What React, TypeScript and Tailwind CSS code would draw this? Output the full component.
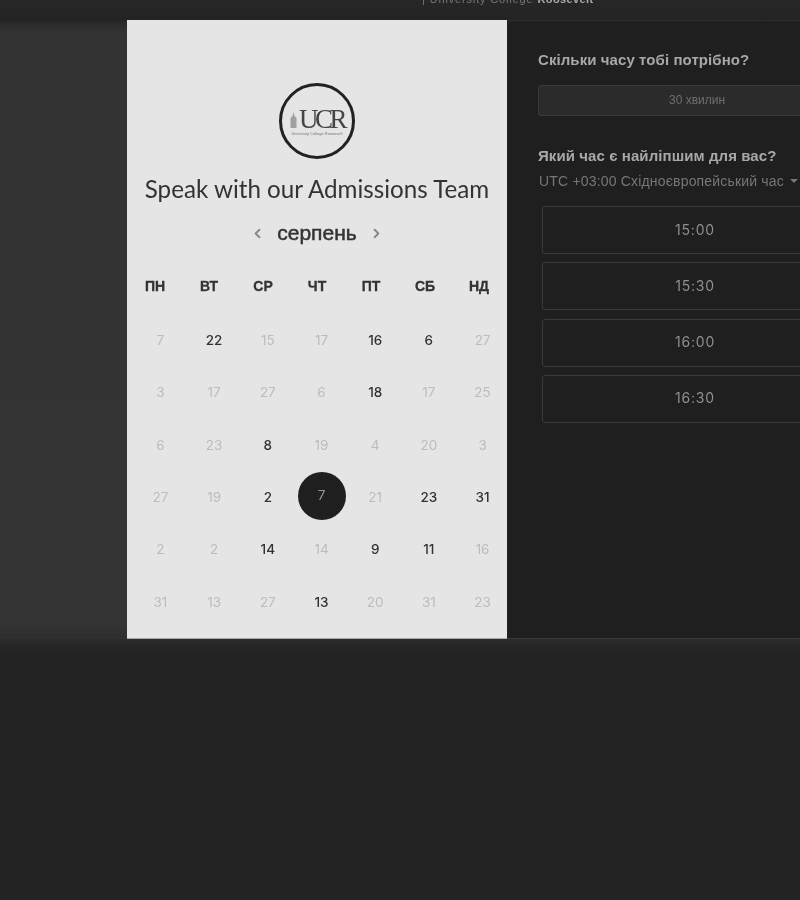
import { ChevronLeft, ChevronRight } from 'lucide-react';

const WEEK_DAYS = ['ПН', 'ВТ', 'СР', 'ЧТ', 'ПТ', 'СБ', 'НД'];

// дні календаря: active = можна вибрати
const DAYS: { n: number; active?: boolean; selected?: boolean }[] = [
  { n: 7 }, { n: 22, active: true }, { n: 15 }, { n: 17 }, { n: 16, active: true }, { n: 6, active: true }, { n: 27 },
  { n: 3 }, { n: 17 }, { n: 27 }, { n: 6 }, { n: 18, active: true }, { n: 17 }, { n: 25 },
  { n: 6 }, { n: 23 }, { n: 8, active: true }, { n: 19 }, { n: 4 }, { n: 20 }, { n: 3 },
  { n: 27 }, { n: 19 }, { n: 2, active: true }, { n: 7, selected: true }, { n: 21 }, { n: 23, active: true }, { n: 31, active: true },
  { n: 2 }, { n: 2 }, { n: 14, active: true }, { n: 14 }, { n: 9, active: true }, { n: 11, active: true }, { n: 16 },
  { n: 31 }, { n: 13 }, { n: 27 }, { n: 13, active: true }, { n: 20 }, { n: 31 }, { n: 23 },
];

const SLOTS = ['15:00', '15:30', '16:00', '16:30'];

function Logo() {
  return (
    <div className="w-[76px] h-[76px] rounded-full border-[3px] border-[#222222] flex flex-col items-center justify-center">
      <div className="flex items-end h-[24px]">
        <svg width="7" height="16" viewBox="0 0 7 16" className="mb-[3px] mr-[2px]">
          <path d="M3.5 0 L4.5 4 L6.5 6 V16 H0.5 V6 L2.5 4 Z" fill="#a0a0a0" />
        </svg>
        <span className="font-['Liberation_Serif',serif] text-[27px] leading-[24px] tracking-[-3.5px] text-[#444444]">UCR</span>
      </div>
      <span className="font-['Liberation_Sans',sans-serif] text-[4px] leading-[5px] text-[#777777] whitespace-nowrap">University College Roosevelt</span>
    </div>
  );
}

function Calendar() {
  return (
    <div className="w-[380px] h-[619px] shrink-0 bg-[#e5e5e5] border-b border-[#a8a8a8] flex flex-col items-center pt-[63px]">
      <Logo />
      <h1 className="mt-[13px] font-['Lato',sans-serif] text-[24.2px] leading-[34px] text-[#333333] whitespace-nowrap">
        Speak with our Admissions Team
      </h1>
      <div className="mt-[11px] flex items-center justify-center gap-[11px] h-[32px]">
        <ChevronLeft size={15} strokeWidth={3} className="text-[#888888]" />
        <span className="w-[82px] text-center font-['Liberation_Sans',sans-serif] text-[21px] text-[#333333] [-webkit-text-stroke:0.5px_#333333]">
          серпень
        </span>
        <ChevronRight size={15} strokeWidth={3} className="text-[#888888]" />
      </div>
      <div className="mt-[27px] self-start ml-[1px] grid grid-cols-[repeat(7,54px)] font-['Liberation_Sans',sans-serif] text-[14px] font-bold leading-[20px] text-[#333333] [-webkit-text-stroke:0.3px_#333333]">
        {WEEK_DAYS.map((day) => (
          <div key={day} className="text-center">{day}</div>
        ))}
      </div>
      <div className="mt-[18px] self-start ml-[6.6px] grid grid-cols-[repeat(7,53.7px)] auto-rows-[52.3px] font-['Inter',sans-serif] text-[13.5px]">
        {DAYS.map((day, index) => (
          <div key={index} className="flex items-center justify-center">
            {day.selected ? (
              <span className="w-[48px] h-[48px] shrink-0 -translate-y-[1px] rounded-full bg-[#1f1f1f] text-[#999999] flex items-center justify-center pb-[2px]">{day.n}</span>
            ) : (
              <span className={day.active ? 'text-[#333333] font-medium' : 'text-[#bcbcbc]'}>{day.n}</span>
            )}
          </div>
        ))}
      </div>
    </div>
  );
}

function TimePanel() {
  return (
    <div className="w-[350px] shrink-0 border-t border-[#2e2e2e] border-b border-b-[#3a3a3a] pl-[31px] pt-[29px] font-['Liberation_Sans',sans-serif]">
      <h2 className="text-[15px] font-bold leading-[20px] tracking-[0.08px] text-[#a8a8a8] whitespace-nowrap">Скільки часу тобі потрібно?</h2>
      <div className="mt-[15px] w-[318px] h-[31px] rounded-[3px] border border-[#3a3a3a] bg-[#2b2b2b] flex items-center justify-center pb-[1px] text-[12px] text-[#6e6e6e]">
        30 хвилин
      </div>
      <h2 className="mt-[30px] text-[15px] font-bold leading-[20px] tracking-[0.08px] text-[#a8a8a8] whitespace-nowrap">Який час є найліпшим для вас?</h2>
      <div className="mt-[5px] ml-[1px] flex items-center gap-[6px] text-[14px] leading-[20px] tracking-[0.18px] text-[#777777] whitespace-nowrap">
        <span>UTC +03:00 Східноєвропейський час</span>
        <span className="w-0 h-0 border-x-[4px] border-x-transparent border-t-[4px] border-t-[#777777]" />
      </div>
      <div className="mt-[15px] ml-[4px] w-[306px] flex flex-col gap-[8.3px]">
        {SLOTS.map((slot) => (
          <div
            key={slot}
            className="h-[48px] rounded-[3px] border border-[#3a3a3a] flex items-center justify-center pb-[2px] font-['Inter',sans-serif] text-[14px] tracking-[0.8px] text-[#8f8f8f]"
          >
            {slot}
          </div>
        ))}
      </div>
    </div>
  );
}

export default function App() {
  return (
    <div className="w-[800px] h-[900px] overflow-hidden bg-[#232323] blur-[0.5px]">
      <div className="h-[20px] overflow-hidden bg-gradient-to-b from-[#272727] to-[#232323] pl-[422px] font-['Liberation_Sans',sans-serif] text-[11px] leading-[12px] tracking-[0.85px] text-[#777777] whitespace-nowrap">
        <span className="block -mt-[7px]">| University College <b className="tracking-[0.4px] text-[#aaaaaa]">Roosevelt</b></span>
      </div>
      <div className="flex h-[619px] bg-[#1f1f1f]">
        <div className="w-[127px] shrink-0 bg-[linear-gradient(to_bottom,#262626,#333333_12px,#343434_97%,#2f2f2f)]" />
        <Calendar />
        <TimePanel />
      </div>
      <div className="h-[12px] bg-gradient-to-b from-[#2c2c2c] to-[#232323]" />
    </div>
  );
}
